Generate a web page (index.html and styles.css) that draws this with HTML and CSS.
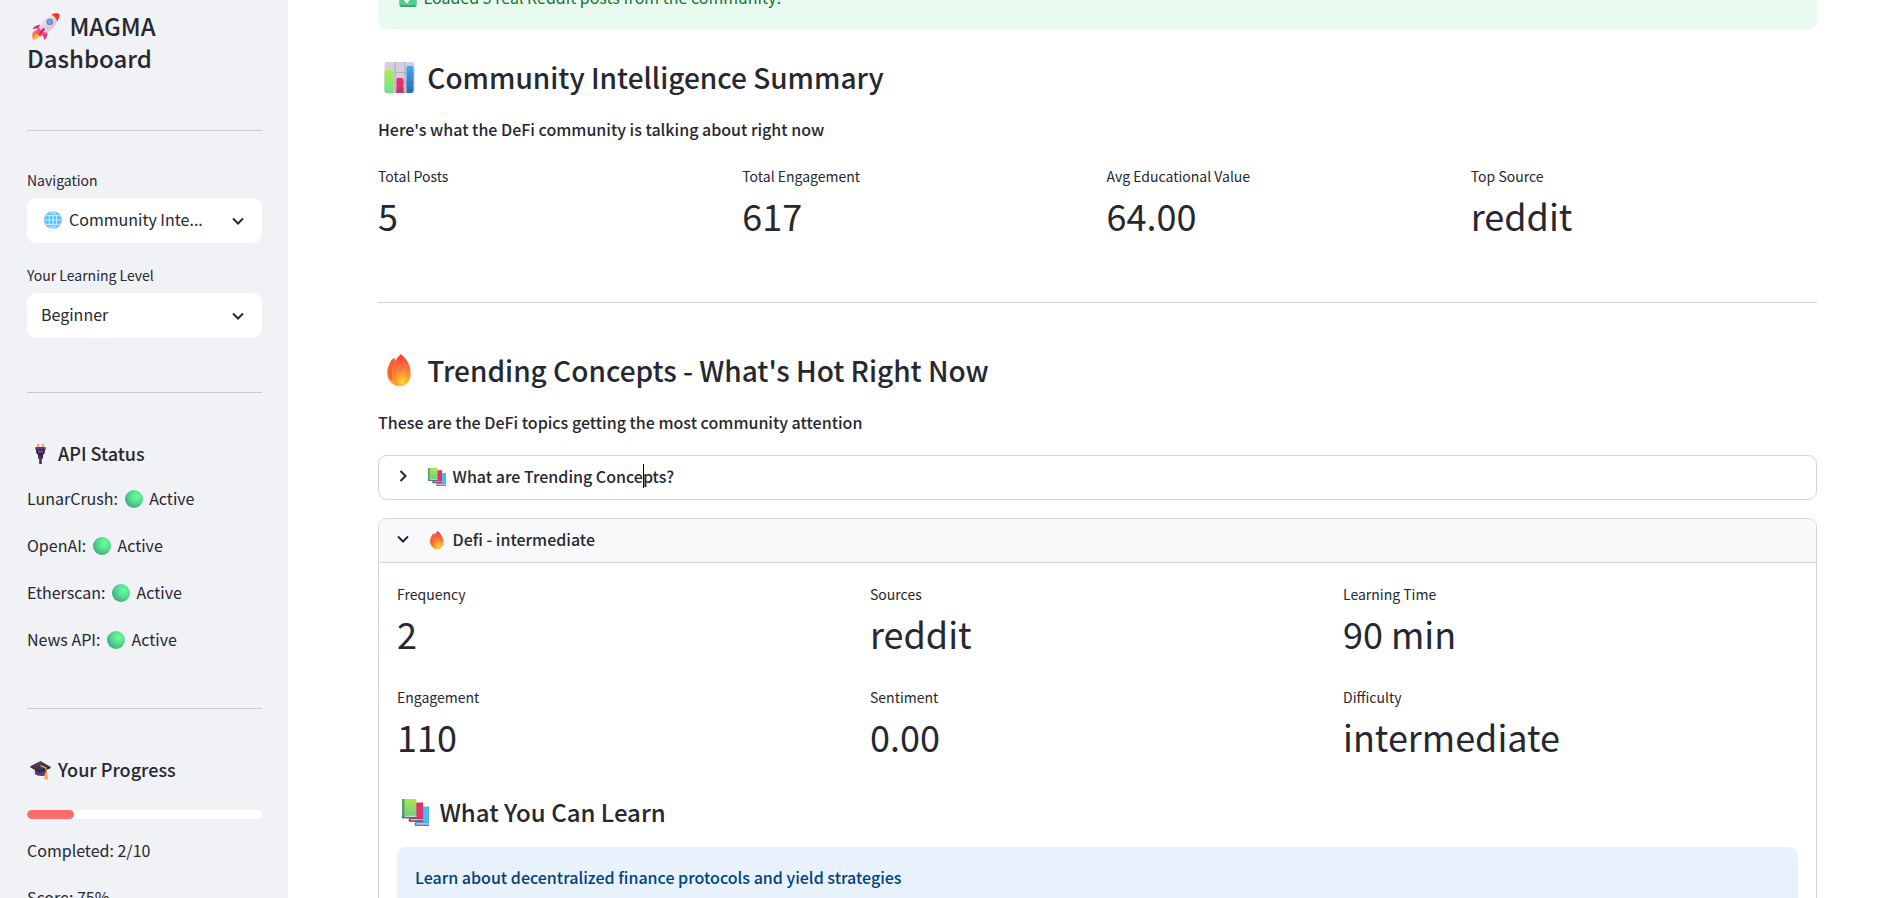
FILE: index.html
```html
<!DOCTYPE html>
<html lang="en">
<head>
<meta charset="utf-8">
<title>MAGMA Dashboard</title>
<link rel="stylesheet" href="styles.css">
</head>
<body>
<svg class="sprite" aria-hidden="true">
  <defs>
    <linearGradient id="g-rocket" x1="0" y1="0" x2="1" y2="1"><stop offset="0" stop-color="#f6f0f8"/><stop offset="1" stop-color="#bdb2c8"/></linearGradient>
    <linearGradient id="g-flame" x1="0" y1="0" x2="0" y2="1"><stop offset="0" stop-color="#f2403f"/><stop offset=".5" stop-color="#ff7b3c"/><stop offset="1" stop-color="#ffb02e"/></linearGradient>
    <radialGradient id="g-core" cx=".6" cy=".85" r=".6"><stop offset="0" stop-color="#ffd22e"/><stop offset=".5" stop-color="#ffae2e"/><stop offset="1" stop-color="#ff8139" stop-opacity="0"/></radialGradient>
    <radialGradient id="g-ball" cx=".65" cy=".35" r=".75"><stop offset="0" stop-color="#6bff9e"/><stop offset=".5" stop-color="#54dc8e"/><stop offset="1" stop-color="#469b84"/></radialGradient>
    <linearGradient id="g-green" x1="0" y1="0" x2="0" y2="1"><stop offset="0" stop-color="#aee653"/><stop offset="1" stop-color="#6cc98a"/></linearGradient>
    <linearGradient id="g-bar" x1="0" y1="0" x2="0" y2="1"><stop offset="0" stop-color="#b3ea4f"/><stop offset="1" stop-color="#6be28e"/></linearGradient>
    <linearGradient id="g-blue" x1="0" y1="0" x2="0" y2="1"><stop offset="0" stop-color="#3fa9f7"/><stop offset="1" stop-color="#2569b5"/></linearGradient>
    <linearGradient id="g-cap" x1="0" y1="0" x2="1" y2="1"><stop offset="0" stop-color="#5a4a72"/><stop offset="1" stop-color="#2d2536"/></linearGradient>
  </defs>
  <symbol id="rocket" viewBox="0 0 32 32">
    <path d="M1 23c2-3 8-3 9 0 1 4-3 7-9 8-1-3-1-6 0-8z" fill="#f7813a"/>
    <path d="M2 28c1-3 5-4 6-2s-2 5-7 6z" fill="#ffb347"/>
    <path d="M10 14C5 14 1 17 1 19l7-1zM18 21c1 5-1 9-3 11l-3-8z" fill="#f5277a"/>
    <path d="M27 3C19 3 13 8 8 17c-1 3 3 8 7 8C24 20 30 13 31 6z" fill="url(#g-rocket)"/>
    <path d="M8 16 4 24l5-1 1 5 7-5c-4 0-8-3-9-7z" fill="#f8478a"/>
    <path d="M23 2c3-2 8-2 9-1 1 2 0 6-2 9-1-4-4-7-7-8z" fill="#f8312f"/>
    <circle cx="21" cy="10.500" r="3.800" fill="#6b6fa8"/><circle cx="21" cy="10.500" r="2.800" fill="#5ea9f5"/>
    <path d="m9 25 5-6" stroke="#d61c5c" stroke-width="2.500" stroke-linecap="round"/>
  </symbol>
  <symbol id="globe" viewBox="0 0 32 32">
    <circle cx="16" cy="16" r="16" fill="#4cbcfb"/>
    <g fill="none" stroke="#def3ff" stroke-width="1.700"><ellipse cx="16" cy="16" rx="7" ry="15"/><ellipse cx="16" cy="16" rx="14" ry="15" opacity=".4"/><path d="M16 1v30M1 16h30M4 8.500h24M4 23.500h24"/></g>
  </symbol>
  <symbol id="plug" viewBox="0 0 32 32">
    <path d="M12.500 0v6M19.500 0v6" stroke="#e79a62" stroke-width="3"/>
    <path d="M8 5h16v4h-1v5l-3 4v5h-2v9h-4v-9h-2v-5l-3-4V9H8z" fill="#33283f"/>
    <path d="M8 5h16v3H8z" fill="#59476b"/><path d="M12 10h8v4h-8z" fill="#6a43a6"/><path d="M15 19v13" stroke="#5b5263" stroke-width="1.500"/>
  </symbol>
  <symbol id="ball" viewBox="0 0 32 32"><circle cx="16" cy="16" r="16" fill="url(#g-ball)"/></symbol>
  <symbol id="cap" viewBox="0 0 32 32">
    <path d="M7 13v9c3 4 15 5 19 1v-9z" fill="#55406d"/>
    <path d="M16 2 0 10v2l15 8 17-7v-2z" fill="#251d2c"/><path d="M16 2 0 10l15 8 17-7z" fill="url(#g-cap)"/>
    <path d="m16 9 9 4v9" fill="none" stroke="#f4a53d" stroke-width="1.800"/>
    <path d="M23 21h4l1 10h-6z" fill="#f9aa51"/>
  </symbol>
  <symbol id="check" viewBox="0 0 32 32">
    <rect x="1" y="1" width="30" height="31" rx="3" fill="#38a16f"/><rect x="1" y="1" width="30" height="28" rx="3" fill="#4fd08a"/>
    <path d="m8 16 6 7L24 9" fill="none" stroke="#fff" stroke-width="4" stroke-linecap="round"/>
  </symbol>
  <symbol id="chart" viewBox="0 0 32 32">
    <rect x="1" y="1" width="30" height="31" rx="3" fill="#d5cedd"/>
    <path d="M11.500 1v31M21.500 1v31M1 11.500h30M1 21.500h30" stroke="#b7adc2" stroke-width="1.200"/>
    <path d="M3 9h5a2 2 0 0 1 2 2v21H4a3 3 0 0 1-3-3V11a2 2 0 0 1 2-2z" fill="url(#g-bar)"/>
    <path d="M14 17h4a2 2 0 0 1 2 2v13h-7V19a2 2 0 0 1 1-2z" fill="#e2306f"/><path d="M13 27h7v5h-7z" fill="#c83265"/>
    <path d="M24 5h4a2 2 0 0 1 2 2v22a3 3 0 0 1-2 3h-5V7a2 2 0 0 1 1-2z" fill="url(#g-blue)"/>
  </symbol>
  <symbol id="fire" viewBox="0 0 32 32">
    <path d="M17 0c8 6 11 14 10 22-1 6-5 10-11 10S5 28 4 22c-1-5 0-9 2-12 1-3 2-5 5-6l1 3c1-3 3-4 5-7z" fill="url(#g-flame)"/>
    <path d="M10 5c-5 6-6 12-5 17l4 6c-1-9-1-16 3-21z" fill="#f0623c"/>
    <path d="M17 1c0 5-1 8-4 12-3 5-3 9-2 13" fill="none" stroke="#e4502f" stroke-width="1" opacity=".6"/>
    <path d="M19 8c6 5 8 9 7 15-1 6-4 9-10 9-6 0-9-5-7-10 2-7 10-7 10-14z" fill="url(#g-core)"/>
  </symbol>
  <symbol id="books" viewBox="0 0 32 32">
    <path d="M14 9h18v21H16z" fill="#43bef2"/><path d="M15 28h17v4H15z" fill="#5b7ecb"/><path d="M17 29.500h15" stroke="#d8d0f4" stroke-width="1.500"/>
    <path d="M8 4h17v21H10z" fill="#e3316b"/><path d="M8 23h17v4H8z" fill="#a62263"/><path d="M10 24.500h15" stroke="#eac3dc" stroke-width="1.500"/>
    <path d="M0 0h17v22H0z" fill="url(#g-green)"/><path d="M0 0h3v22H0z" fill="#5a9f65"/><path d="M0 20h17v3H0z" fill="#3b7d72"/><path d="M3 20.500h14" stroke="#cfe4d9" stroke-width="1.500"/>
  </symbol>
  <symbol id="chevron-down" viewBox="0 0 12 8"><path d="m1 1.500 5 5 5-5" fill="none" stroke="currentColor" stroke-width="2"/></symbol>
</svg>

<div class="app">
  <aside class="sidebar">
    <h1 class="app-title"><svg class="emoji emoji-lg"><use href="#rocket"/></svg> MAGMA Dashboard</h1>
    <hr class="rule">
    <form class="settings">
      <label class="caption" for="nav">Navigation</label>
      <div class="picker picker-icon">
        <svg class="picker-emoji"><use href="#globe"/></svg>
        <select id="nav" class="select"><option value="community-intelligence">Community Inte...</option></select>
        <svg class="picker-arrow"><use href="#chevron-down"/></svg>
      </div>
      <label class="caption" for="level">Your Learning Level</label>
      <div class="picker">
        <select id="level" class="select"><option>Beginner</option><option>Intermediate</option><option>Advanced</option></select>
        <svg class="picker-arrow"><use href="#chevron-down"/></svg>
      </div>
    </form>
    <hr class="rule">
    <h3 class="side-title"><svg class="emoji emoji-md"><use href="#plug"/></svg> API Status</h3>
    <div class="lines">
      <p>LunarCrush: <svg class="emoji"><use href="#ball"/></svg> Active</p>
      <p>OpenAI: <svg class="emoji"><use href="#ball"/></svg> Active</p>
      <p>Etherscan: <svg class="emoji"><use href="#ball"/></svg> Active</p>
      <p>News API: <svg class="emoji"><use href="#ball"/></svg> Active</p>
    </div>
    <hr class="rule">
    <h3 class="side-title"><svg class="emoji emoji-md"><use href="#cap"/></svg> Your Progress</h3>
    <div class="progress" role="progressbar" aria-label="Your Progress" aria-valuenow="20" aria-valuemin="0" aria-valuemax="100"><div class="progress-fill" style="width:20%"></div></div>
    <div class="lines">
      <p>Completed: 2/10</p>
      <p>Score: 75%</p>
    </div>
  </aside>

  <main class="main">
    <div class="alert alert-success"><svg class="emoji"><use href="#check"/></svg> Loaded 5 real Reddit posts from the community!</div>

    <section class="section">
      <h2 class="heading"><svg class="emoji emoji-xl"><use href="#chart"/></svg> Community Intelligence Summary</h2>
      <p class="lead">Here's what the DeFi community is talking about right now</p>
      <dl class="metrics metrics-4">
        <div><dt class="caption">Total Posts</dt><dd class="value">5</dd></div>
        <div><dt class="caption">Total Engagement</dt><dd class="value">617</dd></div>
        <div><dt class="caption">Avg Educational Value</dt><dd class="value">64.00</dd></div>
        <div><dt class="caption">Top Source</dt><dd class="value">reddit</dd></div>
      </dl>
    </section>
    <hr class="rule rule-main">
    <section class="section">
      <h2 class="heading"><svg class="emoji emoji-xl"><use href="#fire"/></svg> Trending Concepts - What's Hot Right Now</h2>
      <p class="lead">These are the DeFi topics getting the most community attention</p>
      <div class="expanders">
        <details class="expander">
          <summary class="expander-head"><svg class="toggle"><use href="#chevron-down"/></svg><span><svg class="emoji"><use href="#books"/></svg> What are Trending Conce<span class="caret"></span>pts?</span></summary>
        </details>
        <details class="expander" open>
          <summary class="expander-head"><svg class="toggle"><use href="#chevron-down"/></svg><span><svg class="emoji"><use href="#fire"/></svg> Defi - intermediate</span></summary>
          <div class="expander-body">
            <dl class="metrics metrics-3">
              <div><dt class="caption">Frequency</dt><dd class="value">2</dd></div>
              <div><dt class="caption">Sources</dt><dd class="value">reddit</dd></div>
              <div><dt class="caption">Learning Time</dt><dd class="value">90 min</dd></div>
              <div><dt class="caption">Engagement</dt><dd class="value">110</dd></div>
              <div><dt class="caption">Sentiment</dt><dd class="value">0.00</dd></div>
              <div><dt class="caption">Difficulty</dt><dd class="value">intermediate</dd></div>
            </dl>
            <h4 class="subheading"><svg class="emoji emoji-lg"><use href="#books"/></svg> What You Can Learn</h4>
            <div class="alert alert-info">Learn about decentralized finance protocols and yield strategies</div>
          </div>
        </details>
      </div>
    </section>
  </main>
</div>
</body>
</html>
```
FILE: styles.css
```css
:root {
  --text: #262730;
  --line: #d3d4d8;
  --panel: #f0f2f6;
  --semibold: 500;
}
* { box-sizing: border-box; }
html, body { margin: 0; height: 100%; overflow: hidden; }
body {
  font: 400 16px/28px "Noto Sans CJK SC", "Noto Sans", sans-serif;
  color: var(--text);
  background: #fff;
}
h1, h2, h3, h4, p, dl, dd { margin: 0; }
h1, h2, h3, h4 { font-weight: var(--semibold); }

.sprite { position: absolute; width: 0; height: 0; }
.app { display: flex; height: 100vh; }

/* emoji boxes, one per text size */
.emoji { width: 24px; height: 18px; vertical-align: -3px; }
.emoji-md { width: 27px; height: 20px; }
.emoji-lg { width: 37px; height: 27px; vertical-align: -4px; }
.emoji-xl { width: 43px; height: 32px; vertical-align: -4px; }

.rule { height: 1px; margin: 55px 0 46px; border: 0; background: #c9cbd1; }
.caption { display: block; font-size: 14px; line-height: 24px; }

/* sidebar */
.sidebar { flex: 0 0 288px; padding: 10px 26px 0 27px; overflow: hidden; background: var(--panel); }
.app-title { padding-bottom: 1px; font-size: 24px; line-height: 32px; }
.settings { margin: -9px 0 -1px; }
.settings .picker + .caption { margin-top: 20px; }
.picker { position: relative; margin-top: 6px; }
.select {
  display: block;
  width: 100%;
  height: 45px;
  padding: 0 50px 3px 14px;
  border: 0;
  border-radius: 9px;
  background: #fff;
  color: inherit;
  font: inherit;
  appearance: none;
  text-overflow: ellipsis;
}
.picker-icon .select { padding-left: 42px; }
.picker-emoji { position: absolute; left: 17px; top: 13px; width: 18px; height: 18px; }
.picker-arrow { position: absolute; right: 18px; top: 19px; width: 12px; height: 8px; pointer-events: none; }
.side-title { font-size: 18px; line-height: 28px; }
.lines { display: grid; gap: 19px; margin-top: 17px; }
.progress { height: 9px; margin-top: 27px; border-radius: 5px; background: #fff; overflow: hidden; }
.progress-fill { height: 100%; border-radius: 5px; background: #ff6c6c; }

/* main column, scrolled part-way past the alert */
.main { flex: 1; min-width: 0; padding: 0 74px 0 90px; overflow: hidden; }
.alert { padding: 16px 18px 18px; border-radius: 9px; }
.alert-success { margin-top: -33px; background: #e8f9ee; color: #177233; }
.alert-info { margin-top: 17px; background: #e8f2fc; color: #004280; font-weight: var(--semibold); }
.heading { margin-top: 28px; font-size: 28px; line-height: 40px; }
.rule + .section .heading { margin-top: 0; }
.lead { margin-top: 18px; font-weight: var(--semibold); }
.metrics { display: grid; gap: 27px 18px; }
.metrics-4 { grid-template-columns: repeat(4, 1fr); margin-top: 21px; }
.metrics-3 { grid-template-columns: repeat(3, 1fr); }
.value { margin-top: 2px; font-size: 36px; line-height: 50px; }
.rule-main { margin: 62px 0 47px; background: var(--line); }

.expanders { display: grid; gap: 18px; margin-top: 19px; }
.expander { border: 1px solid var(--line); border-radius: 9px; }
.expander-head {
  display: flex;
  align-items: center;
  gap: 16px;
  height: 43px;
  padding: 0 18px 3px;
  font-weight: var(--semibold);
  list-style: none;
  border-radius: 8px;
}
.expander[open] .expander-head { height: 44px; border-bottom: 1px solid var(--line); border-radius: 8px 8px 0 0; background: #f8f9fb; }
.toggle { width: 12px; height: 8px; transform: rotate(-90deg); }
.expander[open] .toggle { transform: none; }
.caret { position: relative; }
.caret::after { content: ""; position: absolute; left: 0; top: 0; width: 1px; height: 24px; background: #000; }
.expander-body { padding: 19px 18px 18px; }
.subheading { margin-top: 33px; font-size: 24px; line-height: 36px; }
```
